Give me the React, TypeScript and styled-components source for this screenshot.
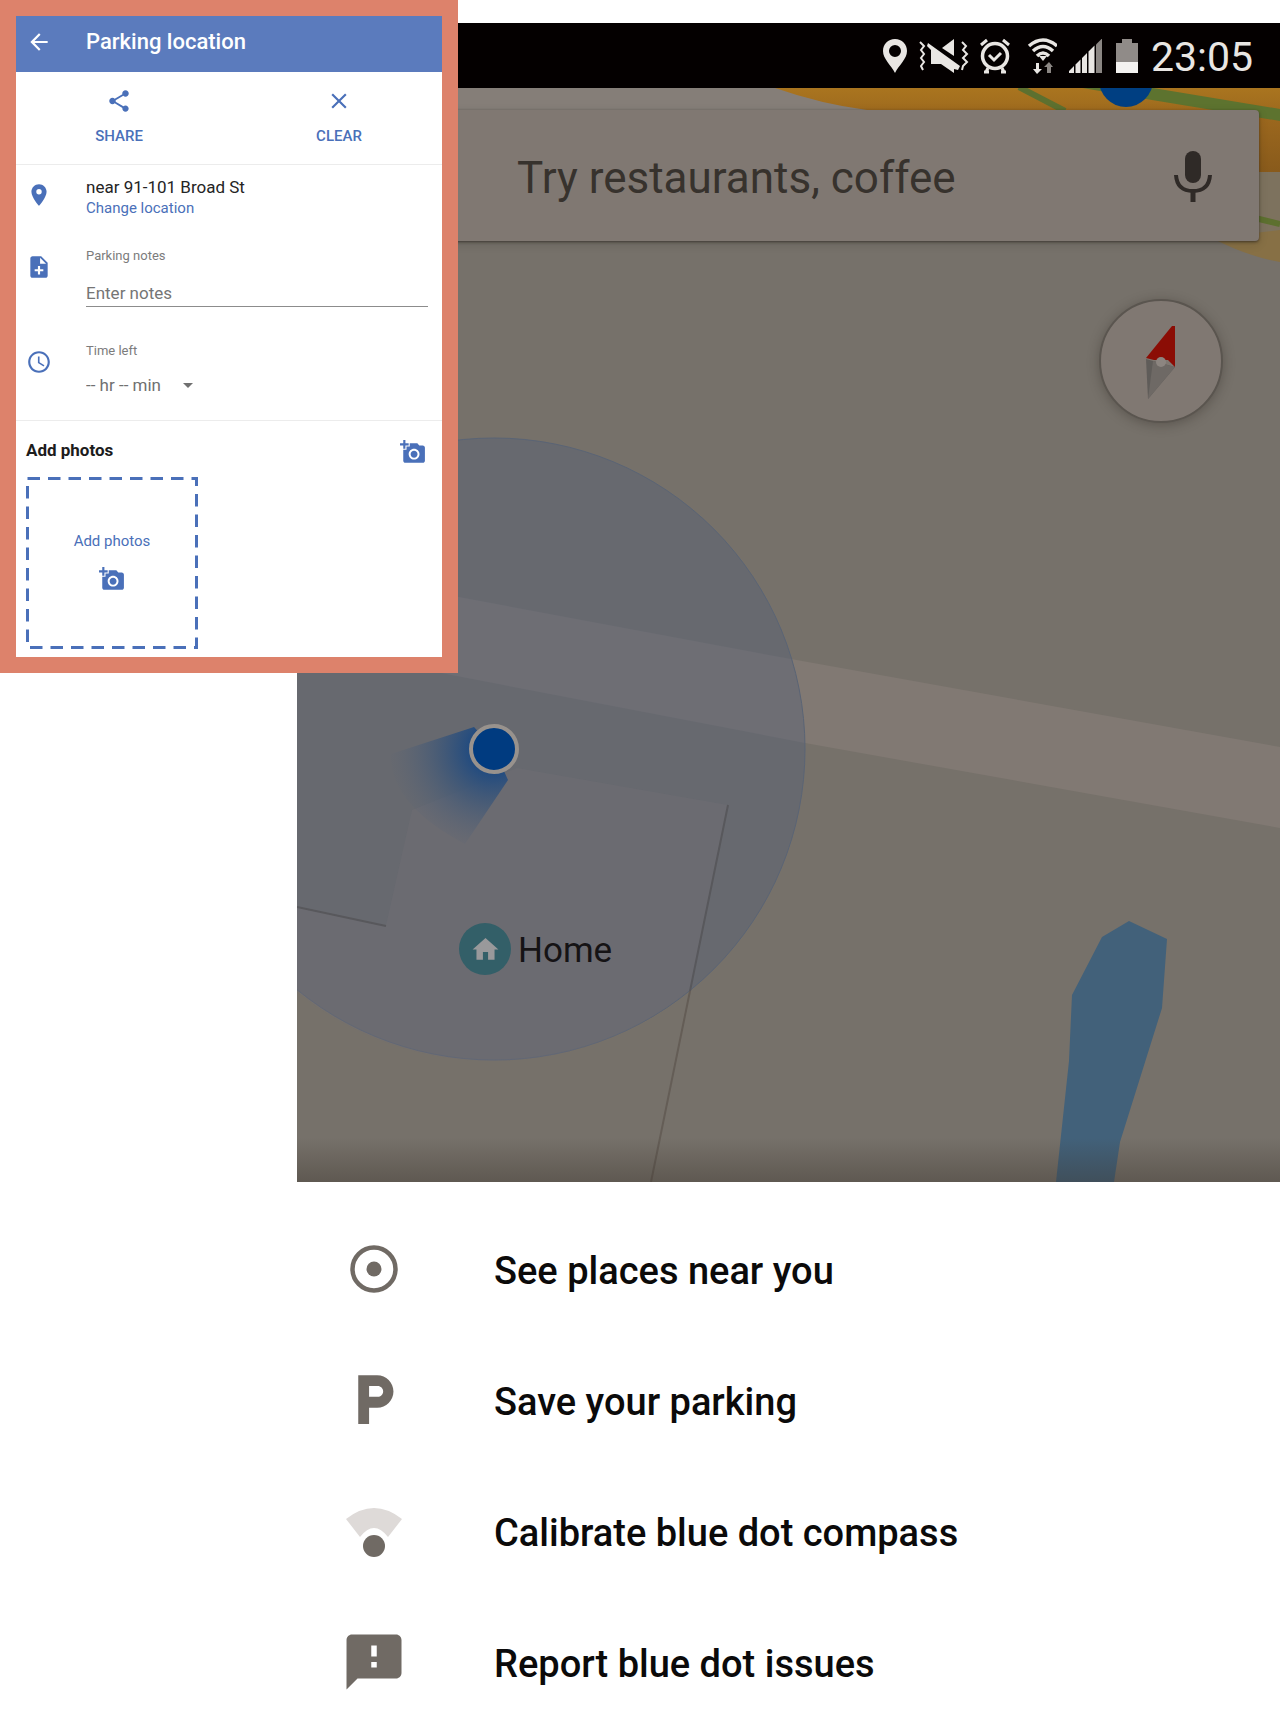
import React from "react";
import styled, { createGlobalStyle } from "styled-components";
import {
  MdAddAPhoto,
  MdArrowBack,
  MdArrowDropDown,
  MdClose,
  MdFeedback,
  MdHome,
  MdLocalParking,
  MdNoteAdd,
  MdPlace,
  MdSchedule,
  MdShare,
} from "react-icons/md";

const color = {
  frame: "#dd826b",
  header: "#5b7bbd",
  link: "#4a70b9",
  label: "#7c7c7c",
  land: "#76716a",
  road: "#817973",
  menuIcon: "#706a64",
};

const GlobalStyle = createGlobalStyle`
  *, *::before, *::after { box-sizing: border-box; }
  body {
    margin: 0;
    background: #fff;
    font-family: Roboto, "Liberation Sans", sans-serif;
  }
  button, input, select {
    margin: 0;
    padding: 0;
    border: 0;
    background: none;
    color: inherit;
    font: inherit;
  }
  button { cursor: pointer; }
  svg { display: block; flex: none; }
`;

const Page = styled.div`
  position: relative;
  padding: 23px 0 6px 297px;
`;

/* ---------- phone with the map ---------- */

const StatusBar = styled.header`
  display: flex;
  align-items: center;
  justify-content: flex-end;
  gap: 12px;
  height: 65px;
  padding-right: 27px;
  background: #040000;
  color: #e9e6e3;
`;

const Clock = styled.time`
  padding-top: 2px;
  font-size: 41px;
  line-height: 48px;
`;

const MapArea = styled.section`
  position: relative;
  aspect-ratio: 983 / 1094;
  padding: 22px 21px 0 20px;
  overflow: hidden;
  background: ${color.land};
`;

const MapCanvas = styled.svg`
  position: absolute;
  inset: 0;
  width: 100%;
  height: 100%;
`;

const SearchBar = styled.form`
  position: relative;
  display: flex;
  align-items: center;
  height: 131px;
  padding: 0 40px 0 200px;
  border-radius: 4px;
  background: #807872;
  box-shadow: 0 1px 3px rgba(30, 25, 20, 0.6), 0 3px 10px rgba(30, 25, 20, 0.15);
`;

const SearchInput = styled.input`
  flex: 1;
  min-width: 0;
  height: 60px;
  padding-top: 4px;
  outline: none;
  font-size: 44px;
  color: #37322d;
  &::placeholder {
    color: #37322d;
    opacity: 1;
  }
`;

const PlainButton = styled.button`
  display: grid;
  place-items: center;
`;

const CompassButton = styled.button`
  position: relative;
  display: block;
  margin: 58px 36px 0 auto;
  width: 124px;
  height: 124px;
  border: 2px solid #5a554f;
  border-radius: 50%;
  background: #807872;
  box-shadow: 0 2px 12px rgba(40, 35, 30, 0.35);
`;

const HomePin = styled.div`
  position: absolute;
  left: 162px;
  top: 833px;
  display: flex;
  align-items: center;
  gap: 7px;
  font-size: 35px;
  line-height: 52px;
  color: #151315;
`;

const HomeLabel = styled.span`
  padding-top: 4px;
`;

const HomeBadge = styled.span`
  display: grid;
  place-items: center;
  width: 52px;
  height: 52px;
  border-radius: 50%;
  background: #335f68;
  color: #99999b;
`;

/* ---------- blue dot menu ---------- */

const Menu = styled.ul`
  margin: 0;
  padding: 23px 0 0;
  list-style: none;
`;

const MenuButton = styled.button`
  display: flex;
  align-items: center;
  gap: 92px;
  width: 100%;
  height: 131px;
  padding-left: 49px;
  font-size: 38px;
  font-weight: 500;
  line-height: 44px;
  text-align: left;
  color: #0b0a0a;
`;

const MenuIcon = styled.span`
  display: flex;
  align-items: center;
  justify-content: center;
  width: 56px;
  height: 56px;
  margin-bottom: 4px;
  color: ${color.menuIcon};
`;

/* ---------- parking card ---------- */

const Card = styled.aside`
  position: absolute;
  left: 0;
  top: 0;
  width: 458px;
  border: 16px solid ${color.frame};
  background: #fff;
`;

const CardHeader = styled.header`
  display: flex;
  align-items: center;
  gap: 34px;
  height: 56px;
  padding: 0 10px 5px;
  background: ${color.header};
  color: #fff;
`;

const CardTitle = styled.h1`
  margin: 0;
  font-size: 22px;
  font-weight: 500;
  line-height: 26px;
`;

const Actions = styled.div`
  display: flex;
  justify-content: center;
  gap: 100px;
  padding: 16px 0;
  border-bottom: 1px solid #ececec;
`;

const ActionButton = styled.button`
  display: flex;
  flex-direction: column;
  align-items: center;
  gap: 12px;
  width: 120px;
  height: 60px;
  font-size: 15px;
  font-weight: 500;
  line-height: 20px;
  color: ${color.link};
`;

const Details = styled.div`
  display: grid;
  grid-template-rows: 72px 95px auto;
  padding: 11px 14px 22px 10px;
  border-bottom: 1px solid #ececec;
`;

const Detail = styled.div`
  display: flex;
  align-items: flex-start;
  gap: 34px;
  & > svg {
    margin-top: 6px;
    color: ${color.link};
  }
`;

const DetailBody = styled.div`
  display: flex;
  flex: 1;
  flex-direction: column;
  align-items: flex-start;
  min-width: 0;
`;

const Address = styled.span`
  font-size: 17px;
  line-height: 22px;
  color: #242424;
`;

const TextLink = styled.a`
  font-size: 15px;
  line-height: 20px;
  color: ${color.link};
  text-decoration: none;
`;

const Label = styled.label`
  font-size: 13px;
  line-height: 16px;
  color: ${color.label};
`;

const NotesInput = styled.input`
  width: 100%;
  height: 28px;
  margin-top: 15px;
  border-bottom: 1px solid #8c8c8c;
  outline: none;
  font-size: 17px;
  &::placeholder {
    color: #757575;
    opacity: 1;
  }
`;

const SelectWrap = styled.span`
  display: flex;
  align-items: center;
  margin: 14px 0 1px;
  color: #707070;
`;

const TimeSelect = styled.select`
  width: 114px;
  height: 24px;
  margin-right: -24px;
  appearance: none;
  outline: none;
  font-size: 17px;
`;

const Photos = styled.section`
  padding: 14px 10px 8px;
`;

const PhotosHeader = styled.div`
  display: flex;
  align-items: center;
  justify-content: space-between;
  height: 34px;
  padding-right: 6px;
  color: ${color.link};
`;

const PhotosTitle = styled.h2`
  margin: 0;
  padding-bottom: 4px;
  font-size: 17px;
  font-weight: 700;
  line-height: 20px;
  color: #1c1c1c;
`;

const PhotoDrop = styled.button`
  position: relative;
  display: flex;
  flex-direction: column;
  align-items: center;
  justify-content: center;
  gap: 15px;
  width: 172px;
  height: 172px;
  margin-top: 8px;
  padding-bottom: 3px;
  font-size: 15px;
  line-height: 20px;
  color: ${color.link};
`;

const DashedFrame = styled.svg`
  position: absolute;
  inset: 0;
  width: 100%;
  height: 100%;
`;

/* ---------- drawings ---------- */

const StatusIcons = () => (
  <>
    <svg width="24" height="34" viewBox="0 0 24 34" fill="currentColor">
      <path
        fillRule="evenodd"
        d="M12 0C5 0 0 5 0 12c0 8 8 14 12 22 4-8 12-14 12-22C24 5 19 0 12 0zm0 6a6 6 0 1 1 0 12 6 6 0 0 1 0-12z"
      />
    </svg>
    <svg width="50" height="34" viewBox="0 0 50 34" fill="currentColor">
      <path
        d="M1 3l4 4-3 4 3 4-3 4 3 4-3 4 2 4M43 3l4 4-3 4 4 4-4 4 4 4-4 4-1 4"
        fill="none"
        stroke="currentColor"
        strokeWidth="2"
      />
      <path d="M9 4l32 23-2 4-4-1v4L22 25H12V11L8 7z" />
      <path d="M35 0v17L23 9z" />
    </svg>
    <svg width="28" height="34" viewBox="0 0 28 34" fill="none" stroke="currentColor" overflow="visible">
      <circle cx="14" cy="17" r="12.500" strokeWidth="3.500" />
      <path d="M8 16l5 5 7-7" strokeWidth="3" />
      <path d="M0 6l6-5M28 6l-6-5M5 33l2-4M23 33l-2-4M3 33h5M20 33h5" strokeWidth="3" />
    </svg>
    <svg width="36" height="36" viewBox="0 0 36 36" fill="none" stroke="currentColor">
      <path d="M8 8q14-12 28 0M12 13q10-9 20 0M16 18q6-6 12 0" strokeWidth="3.500" />
      <path d="M18 18h8l-4 5z" fill="currentColor" stroke="none" />
      <path d="M15 25h3v6h3l-5 5-4-5h3z" fill="currentColor" stroke="none" />
      <path d="M26 35h4v-6h2l-4-5-5 5h3z" fill="#8b8683" stroke="none" />
    </svg>
    <svg width="34" height="34" viewBox="0 0 34 34">
      <path d="M0 34v-2l5-5v7zM6.500 34v-8.500l5-5V34zM13 34V19l5-5v20zM19.500 34V12.500l6-6V34z" fill="currentColor" />
      <path d="M27 34V5.500l6-6V34z" fill="#8b8683" />
    </svg>
    <svg width="24" height="34" viewBox="0 0 24 34">
      <path d="M1 4h6V0h10v4h6v19H1z" fill="#908b88" />
      <path d="M1 23h22v11H1z" fill="#f4f2f0" />
    </svg>
  </>
);

const MicIcon = () => (
  <svg width="52" height="52" viewBox="0 0 52 52" fill="none" stroke="#2f2a27">
    <rect x="18" y="1" width="16" height="32" rx="8" fill="#2f2a27" stroke="none" />
    <path d="M9 25q1 16 17 16t17-16" strokeWidth="4" />
    <path d="M26 41v11" strokeWidth="5" />
  </svg>
);

const MapDrawing = () => (
  <MapCanvas viewBox="0 0 983 1094" preserveAspectRatio="xMinYMin slice" aria-hidden="true">
    <defs>
      <linearGradient id="bottomShade" x1="0" y1="0" x2="0" y2="1">
        <stop offset="0" stopColor="#3c342c" stopOpacity="0" />
        <stop offset="1" stopColor="#3c342c" stopOpacity="0.4" />
      </linearGradient>
      <linearGradient id="city" x1="0" y1="0" x2="0" y2="1">
        <stop offset="0" stopColor="#aa751f" />
        <stop offset="0.3" stopColor="#9c681e" />
        <stop offset="1" stopColor="#85581b" />
      </linearGradient>
      <radialGradient id="beam" gradientUnits="userSpaceOnUse" cx="197" cy="661" r="108">
        <stop offset="0.2" stopColor="#1f4a80" />
        <stop offset="0.5" stopColor="#3c5678" stopOpacity="0.75" />
        <stop offset="1" stopColor="#5a6475" stopOpacity="0" />
      </radialGradient>
    </defs>

    <rect width="983" height="40" fill="#857e78" />
    <path d="M478 0Q524 16 570 22H923V94H983V0z" fill="url(#city)" />
    <path d="M923 84h60v70h-60z" fill="#7d725e" />
    <path d="M915 150l68-8v32q-34-6-68-24z" fill="#877045" />
    <path d="M722-1l46 24M958 130l25 6" stroke="#5d702f" strokeWidth="6" />
    <path d="M780-1h70l133 22v12L855 12z" fill="#5d732f" />
    <circle cx="829" cy="-8" r="27" fill="#003f82" />

    <path d="M0 478l162 31 321 60 500 90v81L508 655 170 590 0 557z" fill={color.road} />
    <path d="M805 849l27-16 38 18-5 69-42 134-6 40h-58l13-121 3-66z" fill="#42617a" />

    <circle cx="197" cy="661" r="311" fill="#535f77" fillOpacity="0.42" stroke="#5a6475" strokeWidth="1" />
    <path d="M0 819l89 18 26-115 105-42 211 37-38 185A311 311 0 0 1 0 904z" fill="#737277" fillOpacity="0.3" />
    <path d="M0 819l89 19M431 717l-38 186" stroke="#58585c" strokeWidth="2" fill="none" />
    <path d="M393 903l-39 191" stroke="#645d56" strokeWidth="2" />

    <path d="M197 661l-20-22-83 27q-2 50 74 90l43-64z" fill="url(#beam)" />
    <circle cx="197" cy="661" r="23" fill="#003b80" stroke="#98928d" strokeWidth="4" />
    <rect y="1050" width="983" height="44" fill="url(#bottomShade)" />
  </MapCanvas>
);

const Needle = () => (
  <svg width="120" height="120" viewBox="2 2 120 120">
    <path d="M47 60l29 8-27 32z" fill="#5f5c59" />
    <path d="M54 62l22 6-27 32z" fill="#6e6965" />
    <path d="M73 27L47 59l8 2h14l7 7V27z" fill="#8b0d05" />
    <circle cx="62" cy="63" r="5" fill="#8c8580" />
  </svg>
);

const NearbyIcon = () => (
  <svg width="56" height="56" viewBox="0 0 56 56">
    <circle cx="28" cy="28" r="21.500" fill="none" stroke="currentColor" strokeWidth="4.500" />
    <circle cx="28" cy="28" r="7.500" fill="currentColor" />
  </svg>
);

const CalibrateIcon = () => (
  <svg width="56" height="56" viewBox="0 0 56 56">
    <path d="M0 16Q28-6 56 16L42 34Q28 16 14 34z" fill="#dedad8" />
    <circle cx="28" cy="43" r="11" fill="currentColor" />
  </svg>
);

const menuItems = [
  { text: "See places near you", icon: <NearbyIcon /> },
  { text: "Save your parking", icon: <MdLocalParking size={65} /> },
  { text: "Calibrate blue dot compass", icon: <CalibrateIcon /> },
  { text: "Report blue dot issues", icon: <MdFeedback size={66} /> },
];

export default function App() {
  return (
    <Page>
      <GlobalStyle />
      <main>
        <StatusBar>
          <StatusIcons />
          <Clock>23:05</Clock>
        </StatusBar>

        <MapArea>
          <MapDrawing />
          <SearchBar onSubmit={(e) => e.preventDefault()}>
            <SearchInput type="text" aria-label="Search the map" placeholder="Try restaurants, coffee" />
            <PlainButton type="button" aria-label="Voice search">
              <MicIcon />
            </PlainButton>
          </SearchBar>
          <CompassButton type="button" aria-label="Compass">
            <Needle />
          </CompassButton>
          <HomePin>
            <HomeBadge>
              <MdHome size={31} />
            </HomeBadge>
            <HomeLabel>Home</HomeLabel>
          </HomePin>
        </MapArea>

        <Menu>
          {menuItems.map((item) => (
            <li key={item.text}>
              <MenuButton type="button">
                <MenuIcon>{item.icon}</MenuIcon>
                {item.text}
              </MenuButton>
            </li>
          ))}
        </Menu>
      </main>

      <Card>
        <CardHeader>
          <PlainButton type="button" aria-label="Back">
            <MdArrowBack size={26} />
          </PlainButton>
          <CardTitle>Parking location</CardTitle>
        </CardHeader>

        <Actions>
          <ActionButton type="button">
            <MdShare size={26} />
            SHARE
          </ActionButton>
          <ActionButton type="button">
            <MdClose size={26} />
            CLEAR
          </ActionButton>
        </Actions>

        <Details>
          <Detail>
            <MdPlace size={26} />
            <DetailBody>
              <Address>near 91-101 Broad St</Address>
              <TextLink href="#change">Change location</TextLink>
            </DetailBody>
          </Detail>
          <Detail>
            <MdNoteAdd size={26} />
            <DetailBody>
              <Label htmlFor="notes">Parking notes</Label>
              <NotesInput id="notes" type="text" placeholder="Enter notes" />
            </DetailBody>
          </Detail>
          <Detail>
            <MdSchedule size={26} />
            <DetailBody>
              <Label htmlFor="time">Time left</Label>
              <SelectWrap>
                <TimeSelect id="time">
                  <option>-- hr -- min</option>
                </TimeSelect>
                <MdArrowDropDown size={24} pointerEvents="none" />
              </SelectWrap>
            </DetailBody>
          </Detail>
        </Details>

        <Photos>
          <PhotosHeader>
            <PhotosTitle>Add photos</PhotosTitle>
            <PlainButton type="button" aria-label="Take a photo">
              <MdAddAPhoto size={26} />
            </PlainButton>
          </PhotosHeader>
          <PhotoDrop type="button">
            <DashedFrame viewBox="0 0 172 172" aria-hidden="true">
              <rect
                x="1.500"
                y="1.500"
                width="169"
                height="169"
                fill="none"
                stroke="currentColor"
                strokeWidth="3"
                strokeDasharray="12.500 8"
              />
            </DashedFrame>
            Add photos
            <MdAddAPhoto size={26} />
          </PhotoDrop>
        </Photos>
      </Card>
    </Page>
  );
}
